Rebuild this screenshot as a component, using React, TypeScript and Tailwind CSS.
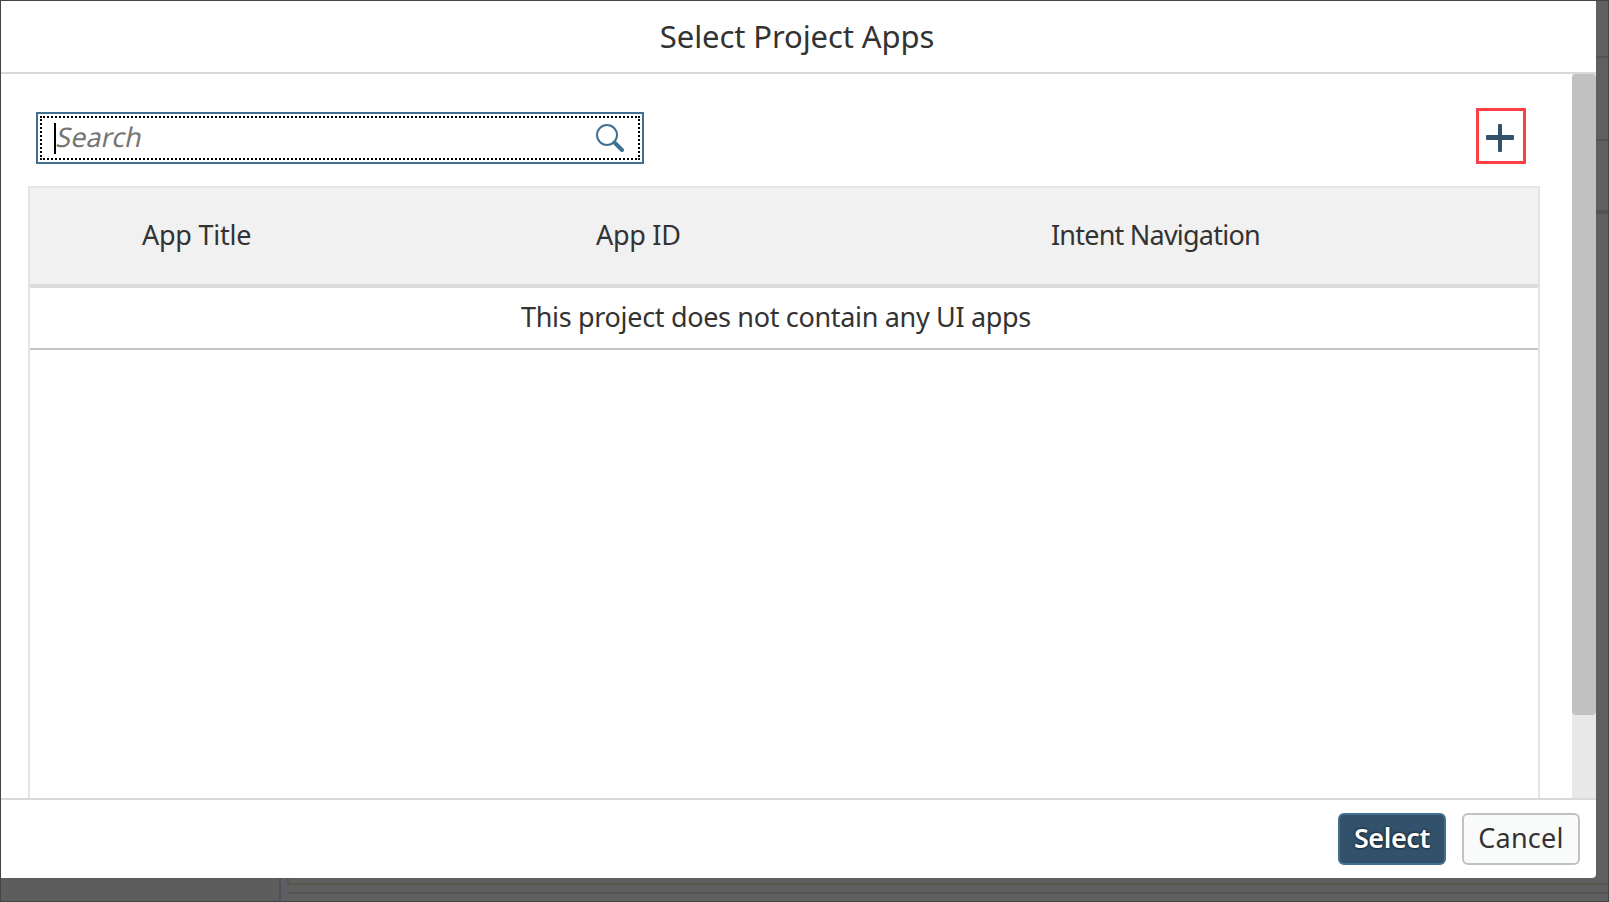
const columns = [
  { title: "App Title", tracking: "tracking-[-0.25px]" },
  { title: "App ID", tracking: "tracking-[-0.3px]" },
  { title: "Intent Navigation", tracking: "tracking-[-0.78px]" },
];

function SearchIcon() {
  return (
    <svg className="h-7 w-7 shrink-0" viewBox="0 0 28 28" fill="none" stroke="#427093">
      <circle cx="11" cy="11" r="10" strokeWidth="2" />
      <path d="M18.5 18.5L26 26" strokeWidth="4" strokeLinecap="round" />
    </svg>
  );
}

function PlusIcon() {
  return (
    <svg className="h-7 w-7" viewBox="0 0 28 28" fill="#32526c">
      <rect x="0" y="11" width="28" height="5" rx="1" />
      <rect x="12" y="0" width="4" height="28" rx="1" />
    </svg>
  );
}

function SearchField() {
  return (
    <div className="h-13 w-[608px] border-2 border-[#427093] p-0.5">
      <div className="flex h-full items-center justify-between border-2 border-dotted border-black pr-3.5 pl-3">
        <div className="flex items-center">
          <span className="h-[31px] w-0.5 bg-black" />
          <span className="-skew-x-12 pb-[3px] pl-px text-[27px] leading-none whitespace-nowrap text-[#757575]">
            Search
          </span>
        </div>
        <SearchIcon />
      </div>
    </div>
  );
}

function AppsTable() {
  return (
    <div className="mr-8 ml-[27px] grow border-x-2 border-t-2 border-[#e5e5e0]">
      <div className="grid h-25 grid-cols-[454px_455px_1fr] items-center border-b-4 border-[#dcdcdc] bg-[#f1f1f1] pb-[3px] pl-28">
        {columns.map((column) => (
          <span key={column.title} className={`text-[27px] leading-none whitespace-nowrap ${column.tracking}`}>
            {column.title}
          </span>
        ))}
      </div>
      <div className="flex h-[62px] items-center justify-center border-b-2 border-[#c4c4c4] pr-4 pb-[3px]">
        <span className="text-[27px] leading-none tracking-[-0.33px] whitespace-nowrap">
          This project does not contain any UI apps
        </span>
      </div>
    </div>
  );
}

export default function App() {
  return (
    <div className="relative h-[902px] w-[1609px] overflow-hidden border border-[#444446] bg-[#5f5f5f] font-['Noto_Sans','Open_Sans',sans-serif] text-[#333333]">
      <div className="flex h-[877px]">
        <section className="flex w-[1595px] flex-col overflow-hidden rounded-br-[4px] bg-white">
          <header className="flex h-[73px] shrink-0 items-center justify-center border-b-2 border-[#d9d9d9] pr-[3px]">
            <h1 className="text-[31px] leading-none tracking-[-0.1px] whitespace-nowrap">Select Project Apps</h1>
          </header>
          <main className="flex h-[724px] shrink-0">
            <div className="flex w-[1571px] flex-col">
              <div className="flex h-28 shrink-0 items-start justify-between pt-[34px] pr-[46px] pl-[35px]">
                <div className="pt-1">
                  <SearchField />
                </div>
                <button className="flex h-14 w-[50px] items-center justify-center border-3 border-[#fc4145] pt-1 pr-0.5">
                  <PlusIcon />
                </button>
              </div>
              <AppsTable />
            </div>
            <div className="w-6 bg-[#e8e8e8]">
              <div className="h-[641px] rounded-[4px] bg-[#c1c1c1]" />
            </div>
          </main>
          <footer className="flex grow items-start justify-end gap-4 border-t-2 border-[#d9d9d9] pt-[13px] pr-4">
            <button className="flex h-13 w-27 items-center justify-center rounded-md border-2 border-[#427093] bg-[#32526c] pb-[3px] text-[27px] leading-none font-semibold tracking-[-0.4px] text-white [text-shadow:0_0_3px_#000]">
              Select
            </button>
            <button className="flex h-13 w-[118px] items-center justify-center rounded-md border-2 border-[#c1c1c1] bg-[#f9fafa] pb-[3px] text-[27px] leading-none tracking-[0.2px]">
              Cancel
            </button>
          </footer>
        </section>
        <aside className="flex w-3 flex-col">
          <div className="h-[57px] border-b-2 border-[#535353]" />
          <div className="h-[83px] border-b-2 border-[#535353]" />
          <div className="h-[73px] border-b-4 border-[#535353]" />
        </aside>
      </div>
      <div className="flex h-[23px] w-[1607px]">
        <div className="w-[278px] bg-[#5d5d5d]" />
        <div className="w-2 border-l-2 border-[#515151] bg-[#5b5f64]" />
        <div className="flex grow flex-col">
          <div className="h-[7px] border-b-2 border-l-2 border-[#56564f]" />
          <div className="h-[9px] border-b-2 border-[#535353]" />
        </div>
      </div>
    </div>
  );
}
